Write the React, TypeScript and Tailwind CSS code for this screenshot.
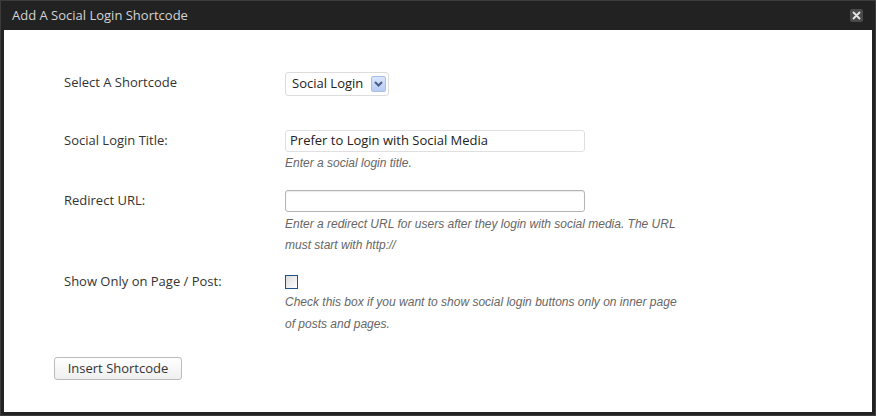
import React from "react";

const sans = { fontFamily: '"Open Sans", "Noto Sans", sans-serif' };
const hint = { fontFamily: '"Liberation Sans", Arial, sans-serif' };

export default function App() {
  return (
    <div className="w-[876px] h-[416px] bg-[#222222] border border-[#3c3c3c] flex flex-col overflow-hidden" style={sans}>
      <div className="h-[29px] shrink-0 flex items-center justify-between pl-[11px] pr-[12px]">
        <span className="text-[13px] text-[#d4d4d4]">Add A Social Login Shortcode</span>
        <button className="w-[13px] h-[13px] bg-[#4a4a4a] rounded-[2px] flex items-center justify-center">
          <svg width="9" height="9" viewBox="0 0 9 9">
            <path d="M1.5 1.5 L7.5 7.5 M7.5 1.5 L1.5 7.5" stroke="#e6e6e6" strokeWidth="1.8" strokeLinecap="round" />
          </svg>
        </button>
      </div>
      <div className="flex-1 bg-white ml-[3px] mr-[3px] mb-[3px] pt-[42px] text-[13px] text-[#333333]">
        {/* Row 1 */}
        <div className="flex pl-[60px]">
          <div className="w-[221px] h-[24px] flex items-center pb-[3px]">Select A Shortcode</div>
          <div className="h-[24px] w-[104px] border border-[#dcdcdc] rounded-[3px] flex items-center justify-between pl-[6px] pr-[2px]">
            <span className="text-[13px] text-[#222]">Social Login</span>
            <span className="w-[15px] h-[16px] rounded-[2px] border border-[#a9bde6] bg-gradient-to-b from-[#dbe6fb] to-[#b7cbf4] flex items-center justify-center">
              <svg width="9" height="6" viewBox="0 0 9 6">
                <path d="M1 1 L4.5 4.5 L8 1" stroke="#4b5e8a" strokeWidth="2" fill="none" />
              </svg>
            </span>
          </div>
        </div>

        {/* Row 2 */}
        <div className="flex pl-[60px] mt-[34px]">
          <div className="w-[221px] h-[22px] flex items-center">Social Login Title:</div>
          <div>
            <div className="w-[300px] h-[22px] border border-[#dfdfdf] rounded-[3px] flex items-center pl-[4px] text-[13px] text-[#222]">Prefer to Login with Social Media</div>
            <div className="italic text-[12px] text-[#666] leading-[22px]" style={hint}>Enter a social login title.</div>
          </div>
        </div>

        {/* Row 3 */}
        <div className="flex pl-[60px] mt-[16px]">
          <div className="w-[221px] h-[22px] flex items-center">Redirect URL:</div>
          <div>
            <div className="w-[300px] h-[22px] border border-[#b4b4b4] rounded-[3px] shadow-[inset_0_1px_1px_rgba(0,0,0,0.08)]"></div>
            <div className="italic text-[12px] text-[#666] leading-[21px] mt-[2px] w-[403px]" style={hint}>Enter a redirect URL for users after they login with social media. The URL must start with http://</div>
          </div>
        </div>

        {/* Row 4 */}
        <div className="flex pl-[60px] mt-[19px]">
          <div className="w-[221px] h-[14px] flex items-center">Show Only on Page / Post:</div>
          <div>
            <div className="w-[13px] h-[14px] border border-[#1e5487] bg-gradient-to-br from-[#dcdcdc] to-[#ffffff]"></div>
            <div className="italic text-[12px] text-[#666] leading-[22px] mt-[2px] w-[403px]" style={hint}>Check this box if you want to show social login buttons only on inner page of posts and pages.</div>
          </div>
        </div>

        {/* Button */}
        <div className="pl-[50px] mt-[22px]">
          <button className="h-[23px] w-[128px] border border-[#bbbbbb] rounded-[3px] bg-gradient-to-b from-[#ffffff] to-[#efefef] text-[13px] text-[#333] flex items-center justify-center">Insert Shortcode</button>
        </div>
      </div>
    </div>
  );
}
